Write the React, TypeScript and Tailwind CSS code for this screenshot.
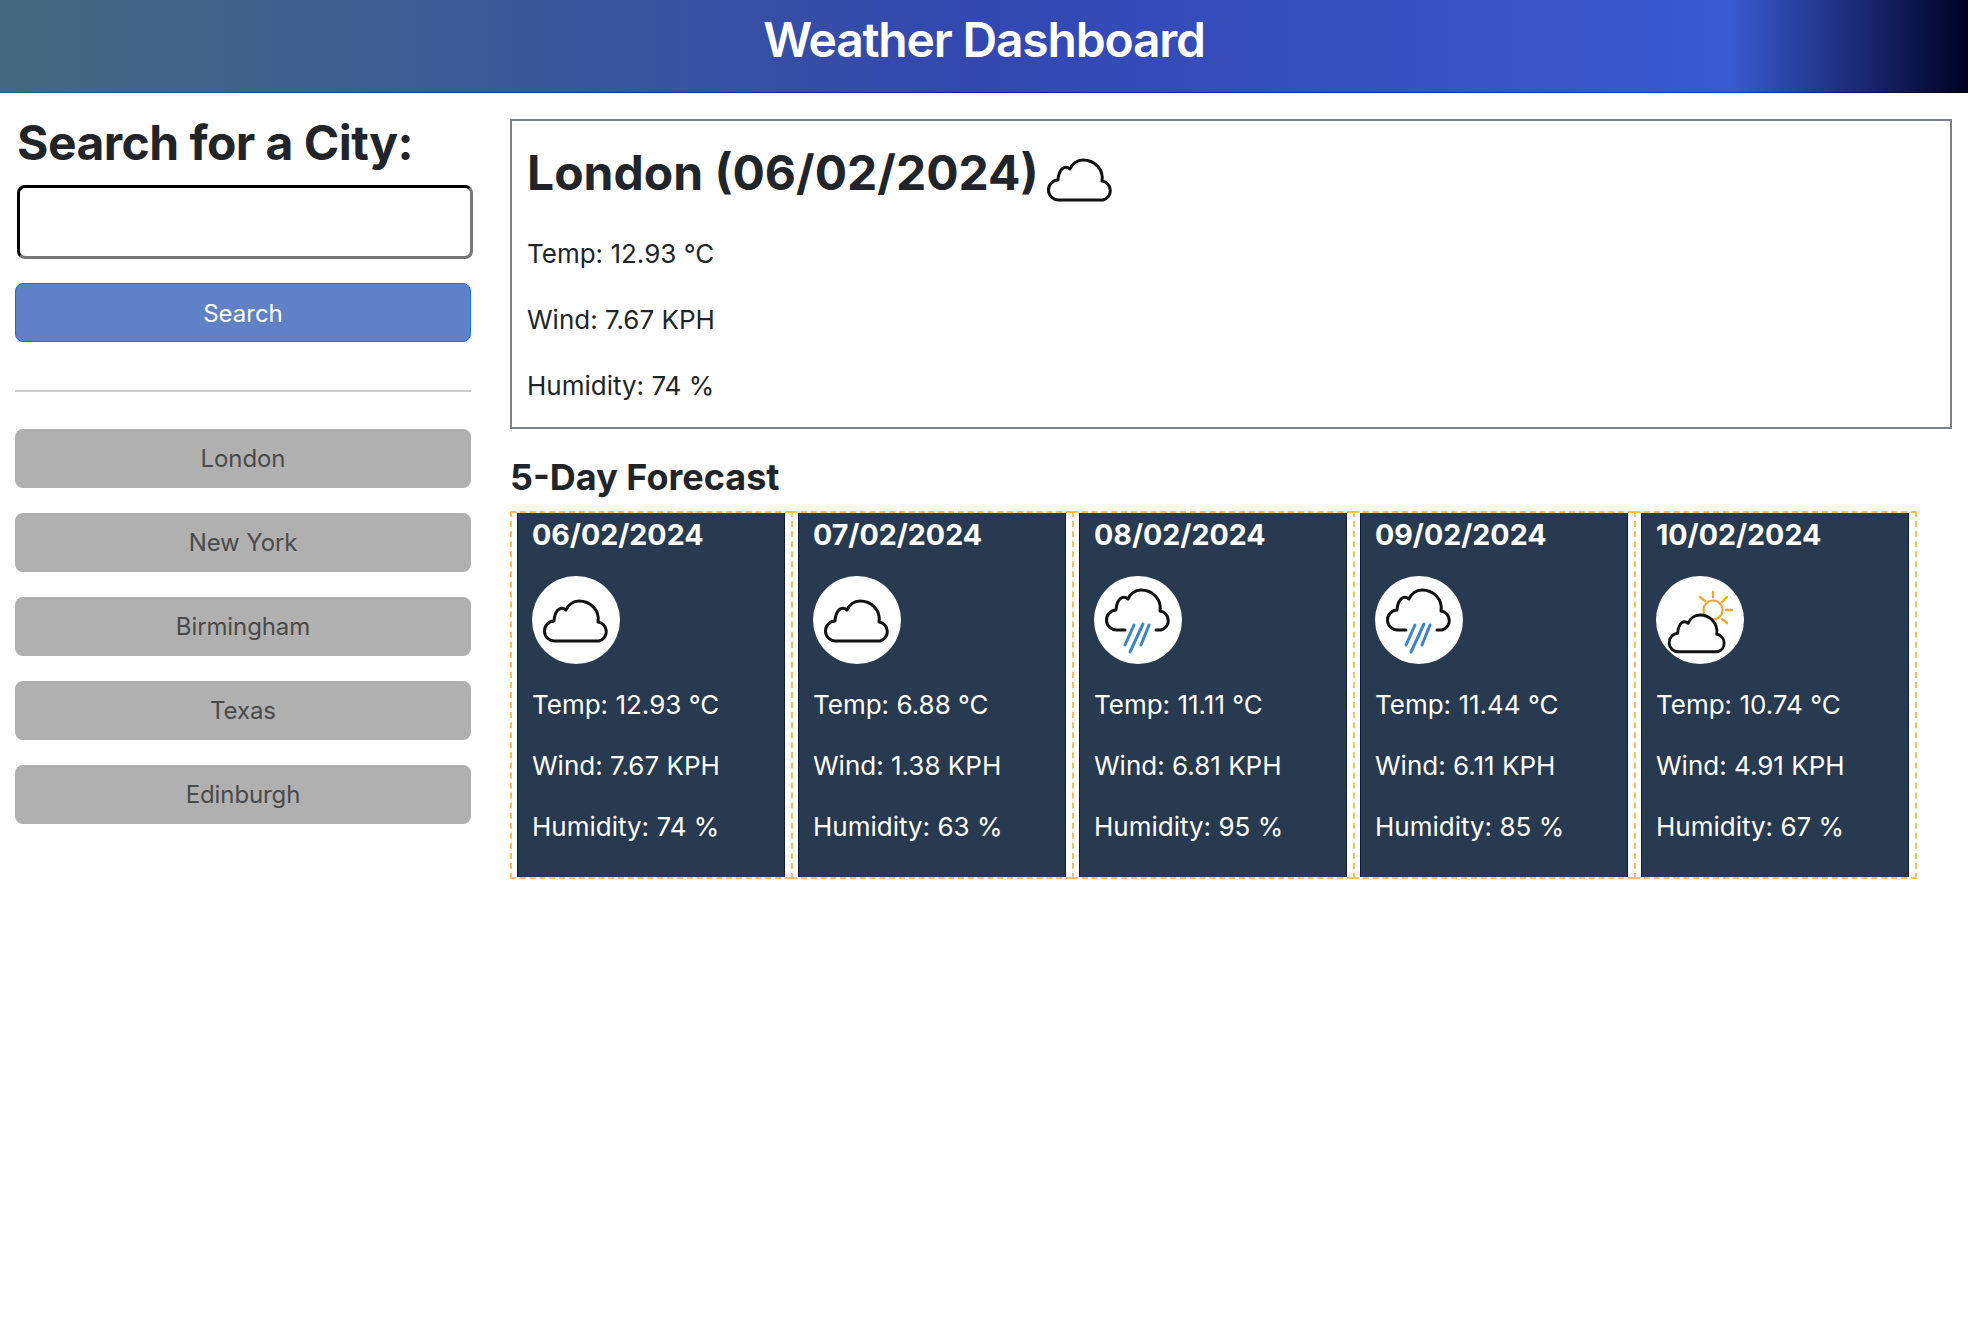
import React from "react";

const CLOUD = "M23 65 H67 A9.7 9.7 0 0 0 66 46 C68 34 58 25 47 25 C41 25 36 29 34 34 C29 30 23 33 22 45 A10 10 0 0 0 23 65 Z";

function Cloud() {
  return (
    <svg viewBox="0 0 88 88" className="w-[88px] h-[88px] block" fill="none">
      <path d={CLOUD} stroke="#111" strokeWidth="3" strokeLinejoin="round" fill="#fff" />
    </svg>
  );
}

function Rain() {
  return (
    <svg viewBox="0 0 88 88" className="w-[88px] h-[88px] block" fill="none" strokeLinecap="round">
      <path d="M31 54 H23 A10 10 0 0 1 22 34 C23 22 29 19 34 23 C36 18 41 14 47 14 C58 14 68 23 66 35 A9.7 9.7 0 0 1 67 54 H62" stroke="#111" strokeWidth="3" strokeLinejoin="round" />
      <path d="M40 49 L31 69 M49 48 L36 76 M55 49 L47 69" stroke="#3a86c8" strokeWidth="3" />
    </svg>
  );
}

function Sun() {
  return (
    <svg viewBox="0 0 88 88" className="w-[88px] h-[88px] block" fill="none" strokeLinecap="round">
      <circle cx="57" cy="34" r="9.5" stroke="#f0a830" strokeWidth="2.2" />
      <path d="M57 16 V21 M71 21 L66 26 M76 34 H70 M71 47 L66 43 M44 21 L49 25" stroke="#f0a830" strokeWidth="2.4" />
      <g transform="translate(2 16) scale(0.89 0.92)">
        <path d={CLOUD} stroke="#111" strokeWidth="3.2" strokeLinejoin="round" fill="#fff" />
      </g>
    </svg>
  );
}

const days = [
  { date: "06/02/2024", icon: <Cloud />, temp: "12.93", wind: "7.67", hum: "74" },
  { date: "07/02/2024", icon: <Cloud />, temp: "6.88", wind: "1.38", hum: "63" },
  { date: "08/02/2024", icon: <Rain />, temp: "11.11", wind: "6.81", hum: "95" },
  { date: "09/02/2024", icon: <Rain />, temp: "11.44", wind: "6.11", hum: "85" },
  { date: "10/02/2024", icon: <Sun />, temp: "10.74", wind: "4.91", hum: "67" },
];

const cities = ["London", "New York", "Birmingham", "Texas", "Edinburgh"];

export default function App() {
  return (
    <div className="[font-family:Inter,sans-serif] text-[#212529] bg-white min-h-[1320px]">
      <header className="h-[93px] flex flex-col bg-[linear-gradient(90deg,#46697e_0%,#3347b0_50%,#3a59cf_88%,#000022_100%)]">
        <div className="flex-1 flex items-center justify-center">
          <h1 className="text-[48px] tracking-[-1.2px] font-semibold text-white leading-none -mt-[13px]">Weather Dashboard</h1>
        </div>
        <div className="h-px bg-[linear-gradient(90deg,#1e5a70_0%,#0a1aa8_50%,#0b35d0_88%,#000000_100%)]" />
      </header>
      <div className="flex pl-[15px] pr-4">
        <aside className="w-[456px] shrink-0 flex flex-col">
          <h2 className="text-[48px] tracking-[-0.55px] font-bold leading-none mt-[26px] ml-[2px]">Search for a City:</h2>
          <input className="mt-[18px] ml-[2px] w-[456px] h-[74px] rounded-[8px] border-[3px] border-t-black border-l-black border-r-[#767676] border-b-[#767676] bg-white" />
          <button className="mt-[24px] h-[59px] pt-[2px] rounded-[8px] border border-[#0d6efd] bg-[#6081c7] text-white text-[24px]">Search</button>
          <hr className="mt-[48px] border-0 h-[2px] bg-[#cccccc]" />
          <div className="mt-[37px] flex flex-col gap-[25px]">
            {cities.map((c) => (
              <button key={c} className="h-[59px] rounded-[8px] bg-[#b0b0b0] text-[#4a4a4a] text-[24px] tracking-[-0.1px]">{c}</button>
            ))}
          </div>
        </aside>
        <main className="ml-[39px] w-[1442px] shrink-0 pt-[26px]">
          <section className="h-[310px] border-2 border-[#7c8287] pl-[15px]">
            <div className="flex items-center h-[100px]">
              <h2 className="text-[48px] font-bold leading-none mt-[3px]">London (06/02/2024)</h2>
              <div className="-ml-[3px] mt-[15px]"><Cloud /></div>
            </div>
            <p className="text-[26px] leading-[30px] mt-[18px]">Temp: 12.93 °C</p>
            <p className="text-[26px] leading-[30px] mt-[36px]">Wind: 7.67 KPH</p>
            <p className="text-[26px] leading-[30px] mt-[36px]">Humidity: 74 %</p>
          </section>
          <h3 className="text-[36px] font-bold leading-none mt-[30px]">5-Day Forecast</h3>
          <div className="mt-[16px] flex">
            {days.map((d) => (
              <div key={d.date} className="w-[281px] last:w-[283px] h-[368px] border-y-2 border-l-2 border-r-0 last:border-r-2 border-dashed border-[#f3c158] pl-[5px]">
                <div className="h-full w-[268px] bg-[#283a50] border-x border-x-[#0c1a3c] pl-[14px] text-white">
                  <div className="text-[28.6px] font-bold leading-none pt-[8px]">{d.date}</div>
                  <div className="mt-[26px] w-[88px] h-[88px] rounded-full bg-white overflow-hidden">{d.icon}</div>
                  <p className="text-[26px] leading-[30px] mt-[26px]">Temp: {d.temp} °C</p>
                  <p className="text-[26px] leading-[30px] mt-[31px]">Wind: {d.wind} KPH</p>
                  <p className="text-[26px] leading-[30px] mt-[31px]">Humidity: {d.hum} %</p>
                </div>
              </div>
            ))}
          </div>
        </main>
      </div>
    </div>
  );
}
